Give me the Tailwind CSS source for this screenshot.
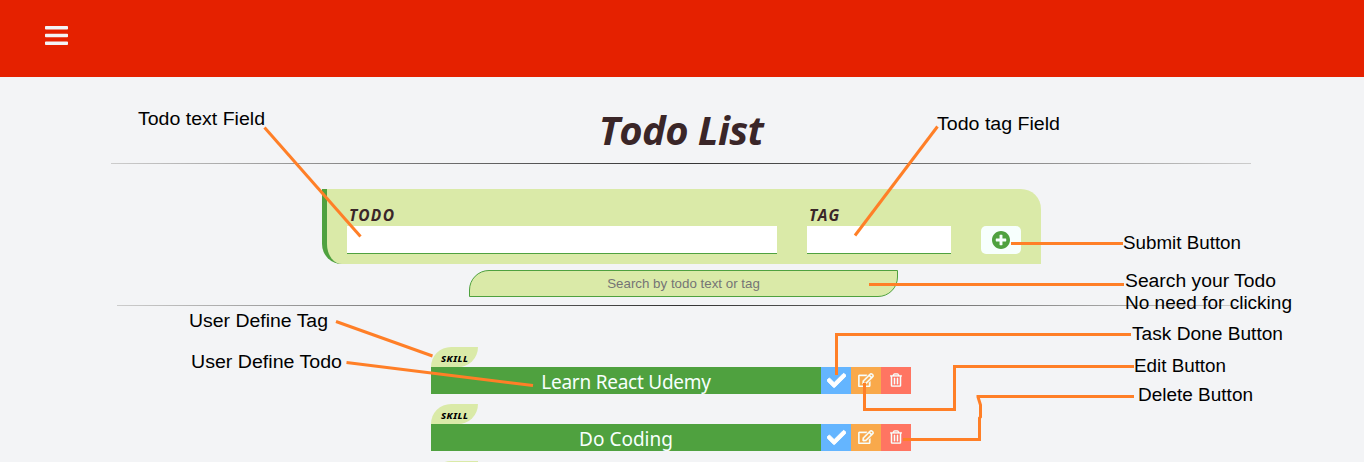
<!DOCTYPE html>
<html lang="en">
<head>
<meta charset="utf-8">
<title>Todo List</title>
<script src="https://cdn.jsdelivr.net/npm/@tailwindcss/browser@4"></script>
</head>
<body class="relative h-[462px] overflow-hidden bg-[#f3f4f6] font-['Noto_Sans',sans-serif] text-[#3a2628]">
<svg class="hidden">
  <symbol id="check" viewBox="0 0 512 512"><path d="M173.898 439.404l-166.4-166.4c-9.997-9.997-9.997-26.206 0-36.204l36.203-36.204c9.997-9.998 26.207-9.998 36.204 0L192 312.69 432.095 72.596c9.997-9.997 26.207-9.997 36.204 0l36.203 36.204c9.997 9.997 9.997 26.206 0 36.204l-294.4 294.401c-9.998 9.997-26.207 9.997-36.204-.001z"/></symbol>
  <symbol id="edit" viewBox="0 0 576 512"><path d="M402.3 344.9l32-32c5-5 13.700-1.500 13.700 5.700V464c0 26.500-21.500 48-48 48H48c-26.500 0-48-21.500-48-48V112c0-26.500 21.500-48 48-48h273.500c7.100 0 10.700 8.600 5.700 13.700l-32 32c-1.500 1.500-3.500 2.300-5.700 2.300H48v352h352V350.500c0-2.100.8-4.100 2.300-5.600zm156.600-201.800L296.300 405.700l-90.400 10c-26.200 2.900-48.500-19.200-45.600-45.600l10-90.400L432.900 17.100c22.900-22.900 59.900-22.900 82.700 0l43.200 43.200c22.900 22.900 22.900 60 .1 82.800zM460.100 174L402 115.900 216.200 301.800l-7.300 65.300 65.300-7.300L460.100 174zm64.800-79.700l-43.200-43.200c-4.100-4.100-10.800-4.100-14.800 0L436 82l58.100 58.100 30.900-30.900c4-4.200 4-10.800-.1-14.900z"/></symbol>
  <symbol id="trash" viewBox="0 0 448 512"><path d="M268 416h24a12 12 0 0 0 12-12V188a12 12 0 0 0-12-12h-24a12 12 0 0 0-12 12v216a12 12 0 0 0 12 12zM432 80h-82.410l-34-56.700A48 48 0 0 0 274.410 0H173.590a48 48 0 0 0-41.160 23.300L98.410 80H16A16 16 0 0 0 0 96v16a16 16 0 0 0 16 16h16v336a48 48 0 0 0 48 48h288a48 48 0 0 0 48-48V128h16a16 16 0 0 0 16-16V96a16 16 0 0 0-16-16zM171.840 50.910A6 6 0 0 1 177 48h94a6 6 0 0 1 5.150 2.910L293.610 80H154.390zM368 464H80V128h288zm-212-48h24a12 12 0 0 0 12-12V188a12 12 0 0 0-12-12h-24a12 12 0 0 0-12 12v216a12 12 0 0 0 12 12z"/></symbol>
</svg>

<header class="flex h-[77px] items-start bg-[#e52100] pl-[45px] pt-[23px]">
  <svg class="h-[25px] w-[23px]" viewBox="0 0 448 512" preserveAspectRatio="none" fill="#f3f4f6"><path d="M16 132h416c8.837 0 16-7.163 16-16V76c0-8.837-7.163-16-16-16H16C7.163 60 0 67.163 0 76v40c0 8.837 7.163 16 16 16zm0 160h416c8.837 0 16-7.163 16-16v-40c0-8.837-7.163-16-16-16H16c-8.837 0-16 7.163-16 16v40c0 8.837 7.163 16 16 16zm0 160h416c8.837 0 16-7.163 16-16v-40c0-8.837-7.163-16-16-16H16c-8.837 0-16 7.163-16 16v40c0 8.837 7.163 16 16 16z"/></svg>
</header>

<main class="flex w-[1363px] flex-col items-center">
  <h1 class="mt-[22px] h-[64px] whitespace-nowrap pr-px font-['Open_Sans',sans-serif] text-[40px] font-bold italic leading-[61px] tracking-[-0.6px]">Todo List</h1>
  <div class="mr-px h-px w-[1140px] bg-linear-to-r from-[#cccccc] via-[#333333] to-[#cccccc]"></div>

  <form class="mt-[25px] flex h-[75px] w-[719px] rounded-bl-[20px] rounded-tr-[20px] border-l-[5px] border-[#4fa13f] bg-[#daeaa8] pl-5 pt-[17px]">
    <div class="w-[430px]">
      <label class="block h-5 pl-[2px] text-[15.500px] font-bold italic leading-[18px] tracking-[1.3px]">TODO</label>
      <div class="h-[28px] border-b border-[#4fa13f] bg-white"></div>
    </div>
    <div class="ml-[30px] w-[144px]">
      <label class="block h-5 pl-[2px] text-[15.500px] font-bold italic leading-[18px] tracking-[1.3px]">TAG</label>
      <div class="h-[28px] border-b border-[#4fa13f] bg-white"></div>
    </div>
    <button type="button" class="ml-[30px] mt-5 flex h-[28px] w-10 justify-center rounded-[5px] bg-[#f7fffd] pt-[5px]">
      <svg class="mr-px size-[18px]" viewBox="8 8 496 496" fill="#4fa13f"><path d="M256 8C119 8 8 119 8 256s111 248 248 248 248-111 248-248S393 8 256 8zm144 276c0 6.600-5.400 12-12 12h-92v92c0 6.600-5.400 12-12 12h-56c-6.600 0-12-5.400-12-12v-92h-92c-6.600 0-12-5.400-12-12v-56c0-6.600 5.400-12 12-12h92v-92c0-6.600 5.400-12 12-12h56c6.600 0 12 5.400 12 12v92h92c6.600 0 12 5.400 12 12v56z"/></svg>
    </button>
  </form>

  <div class="ml-[4px] mt-[6px] h-[27px] w-[429px] rounded-br-[20px] rounded-tl-[20px] border border-[#4fa13f] bg-[#daeaa8] text-center font-['Liberation_Sans',sans-serif] text-[13.333px] leading-[25px] text-[#757575]">Search by todo text or tag</div>
  <div class="mt-2 h-px w-[1129px] bg-linear-to-r from-[#cccccc] via-[#333333] to-[#cccccc]"></div>

  <ul class="ml-[431px] mt-[41px] flex w-[480px] flex-col gap-[10px] self-start">
    <li>
      <div class="h-5 w-[47px] rounded-br-[20px] rounded-tl-[20px] bg-[#daeaa8] pl-[10px] pt-[2px] text-[9.500px] font-extrabold italic leading-[20px] tracking-[0.5px] text-black">SKILL</div>
      <div class="flex h-[27px]">
        <div class="w-[390px] bg-[#4fa13f] text-center text-[19px] leading-[30px] tracking-[-0.25px] text-[#f7fffd]">Learn React Udemy</div>
        <div class="flex w-[30px] justify-center bg-[#64b5ff] pt-[4px]"><svg class="size-[19px] stroke-white stroke-[24]" fill="#fff"><use href="#check"/></svg></div>
        <div class="flex w-[30px] justify-center bg-[#f9a94b] pt-[6px]"><svg class="h-[14px] w-[16px] stroke-[#f7fffd] stroke-[14]" fill="#f7fffd"><use href="#edit"/></svg></div>
        <div class="flex w-[30px] justify-center bg-[#ff7562] pt-[6px]"><svg class="h-[14px] w-[12px] stroke-[#f7fffd] stroke-[8]" fill="#f7fffd"><use href="#trash"/></svg></div>
      </div>
    </li>
    <li>
      <div class="h-5 w-[47px] rounded-br-[20px] rounded-tl-[20px] bg-[#daeaa8] pl-[10px] pt-[2px] text-[9.500px] font-extrabold italic leading-[20px] tracking-[0.5px] text-black">SKILL</div>
      <div class="flex h-[27px]">
        <div class="w-[390px] bg-[#4fa13f] text-center text-[19px] leading-[30px] text-[#f7fffd]">Do Coding</div>
        <div class="flex w-[30px] justify-center bg-[#64b5ff] pt-[4px]"><svg class="size-[19px] stroke-white stroke-[24]" fill="#fff"><use href="#check"/></svg></div>
        <div class="flex w-[30px] justify-center bg-[#f9a94b] pt-[6px]"><svg class="h-[14px] w-[16px] stroke-[#f7fffd] stroke-[14]" fill="#f7fffd"><use href="#edit"/></svg></div>
        <div class="flex w-[30px] justify-center bg-[#ff7562] pt-[6px]"><svg class="h-[14px] w-[12px] stroke-[#f7fffd] stroke-[8]" fill="#f7fffd"><use href="#trash"/></svg></div>
      </div>
    </li>
    <li><div class="h-5 w-[47px] rounded-br-[20px] rounded-tl-[20px] bg-[#daeaa8]"></div></li>
  </ul>
</main>

<!-- Callouts over the page -->
<svg class="absolute left-0 top-0 h-[462px] w-[1364px]" viewBox="0 0 1364 462">
  <g fill="none" stroke="#ff7f27" stroke-width="3">
    <path d="M264.500 127.500L360.500 236.500"/>
    <path d="M937.500 126.500L855 235.500"/>
    <path d="M1011 243.500H1123"/>
    <path d="M869 284.500H1124"/>
    <path d="M336 321.500L432.500 356"/>
    <path d="M346.500 362.500L533 385.500"/>
    <path d="M836.500 375V334.500H1131"/>
    <path d="M864.500 383V409.500H954.500V366.500H1134"/>
    <path d="M903 439.500H979.500V418L980.500 417V405L978 397V396.500H1134"/>
  </g>
  <g class="font-['Liberation_Sans',sans-serif] text-[19.200px]" fill="#000">
    <text x="138" y="125" textLength="127" lengthAdjust="spacingAndGlyphs">Todo text Field</text>
    <text x="937" y="130" textLength="123" lengthAdjust="spacingAndGlyphs">Todo tag Field</text>
    <text x="1123" y="249" textLength="118" lengthAdjust="spacingAndGlyphs">Submit Button</text>
    <text x="1125" y="287" textLength="151" lengthAdjust="spacingAndGlyphs">Search your Todo</text>
    <text x="1125" y="309" textLength="167" lengthAdjust="spacingAndGlyphs">No need for clicking</text>
    <text x="1132" y="340" textLength="151" lengthAdjust="spacingAndGlyphs">Task Done Button</text>
    <text x="1134" y="372" textLength="92" lengthAdjust="spacingAndGlyphs">Edit Button</text>
    <text x="1138" y="401" textLength="115" lengthAdjust="spacingAndGlyphs">Delete Button</text>
    <text x="189" y="327" textLength="139" lengthAdjust="spacingAndGlyphs">User Define Tag</text>
    <text x="191" y="368" textLength="151" lengthAdjust="spacingAndGlyphs">User Define Todo</text>
  </g>
</svg>
</body>
</html>
